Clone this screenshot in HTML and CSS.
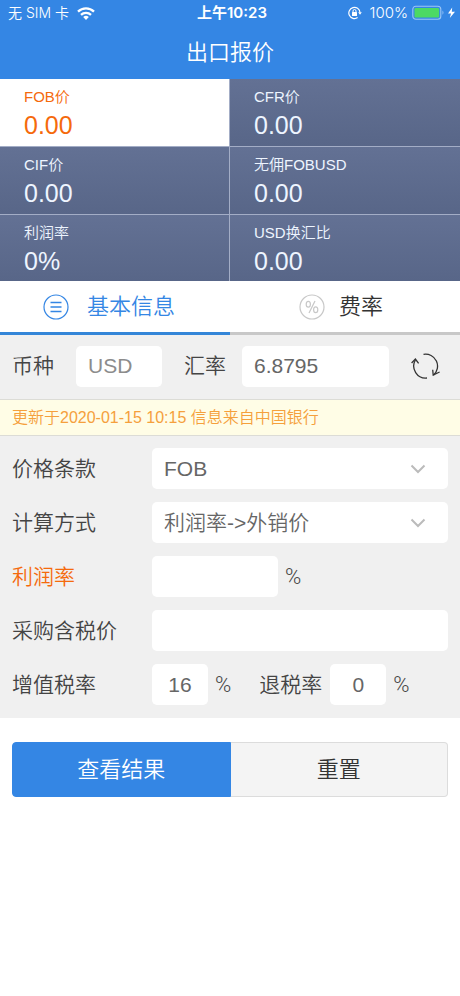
FILE: index.html
```
<!DOCTYPE html>
<html lang="zh-CN">
<head>
    <meta charset="UTF-8">
    <meta name="viewport" content="width=device-width, initial-scale=1.0">
    <title>出口报价</title>
    <link rel="stylesheet" href="styles.css">
</head>
<body>

    <!-- 顶部 -->
    <header class="header">
        <div class="status">
            <div class="status-left">
                <span>无 SIM 卡</span>
                <svg width="18" height="13" viewBox="0 0 18 13">
                    <g fill="none" stroke="#fff" stroke-width="2.3">
                        <path d="M1 4.6 A11.5 11.5 0 0 1 17 4.6"/>
                        <path d="M4 7.8 A7.2 7.2 0 0 1 14 7.8"/>
                    </g>
                    <path d="M9 13 L6.2 10 A4 4 0 0 1 11.8 10 Z" fill="#fff"/>
                </svg>
            </div>
            <div class="status-time">上午10:23</div>
            <div class="status-right">
                <svg width="14" height="14" viewBox="0 0 14 14">
                    <path d="M9.6 11.6 A5.6 5.6 0 1 1 12 6.4" fill="none" stroke="#fff" stroke-width="1.2"/>
                    <path d="M10.2 6.2 H13.8 L12 8.8 Z" fill="#fff"/>
                    <rect x="4" y="6" width="5" height="4" rx="0.6" fill="#fff"/>
                    <path d="M5 6.5 V5 A1.5 1.5 0 0 1 8 5 V6.5" fill="none" stroke="#fff" stroke-width="1"/>
                </svg>
                <span class="percent">100%</span>
                <svg width="44" height="16" viewBox="0 0 44 16">
                    <rect x="0.8" y="1.2" width="28" height="13" rx="3" fill="none" stroke="#9cc6f5" stroke-width="1.1"/>
                    <rect x="2.5" y="3" width="24.6" height="9.6" rx="1.2" fill="#4cd964"/>
                    <path d="M30.5 5.6 Q32.4 7.7 30.5 9.8 Z" fill="#9cc6f5"/>
                    <path d="M40.2 2.5 L36 8.6 H39 L37.8 13 L43 6.8 H39.8 Z" fill="#fff"/>
                </svg>
            </div>
        </div>
        <h1 class="title">出口报价</h1>
    </header>

    <main>
        <!-- 结果 -->
        <section class="results">
            <div class="cell active"><span class="name">FOB价</span><span class="value">0.00</span></div>
            <div class="cell"><span class="name">CFR价</span><span class="value">0.00</span></div>
            <div class="cell"><span class="name">CIF价</span><span class="value">0.00</span></div>
            <div class="cell"><span class="name">无佣FOBUSD</span><span class="value">0.00</span></div>
            <div class="cell"><span class="name">利润率</span><span class="value">0%</span></div>
            <div class="cell"><span class="name">USD换汇比</span><span class="value">0.00</span></div>
        </section>

        <!-- 标签页 -->
        <nav class="tabs">
            <a href="#basic" class="tab active">
                <svg width="26" height="26" viewBox="0 0 26 26" fill="none" stroke="#3486e4">
                    <circle cx="13" cy="13" r="12" stroke-width="1.2"/>
                    <path d="M7.5 8.5 H18.5 M7.5 13 H18.5 M7.5 17.5 H18.5" stroke-width="1.4"/>
                </svg>
                <span>基本信息</span>
            </a>
            <a href="#rates" class="tab">
                <svg width="26" height="26" viewBox="0 0 26 26" fill="none" stroke="#c8c8c8">
                    <circle cx="13" cy="13" r="12" stroke-width="1.2"/>
                    <ellipse cx="9.3" cy="10.2" rx="2.1" ry="2.9" stroke-width="1.2"/>
                    <ellipse cx="16.7" cy="15.8" rx="2.1" ry="2.9" stroke-width="1.2"/>
                    <path d="M16 7 L10 19" stroke-width="1.2"/>
                </svg>
                <span>费率</span>
            </a>
        </nav>

        <form id="basic">
            <div class="rate">
                <label for="currency">币种</label>
                <input type="text" id="currency" class="field currency" value="USD" readonly>
                <label for="exchange">汇率</label>
                <input type="text" id="exchange" class="field exchange" value="6.8795">
                <button type="button" class="refresh" aria-label="刷新汇率">
                    <svg width="30" height="26" viewBox="0 0 30 26" fill="none" stroke="#333" stroke-width="1.3">
                        <path d="M12.5 1.3 A12 12 0 0 1 22.4 22.2"/>
                        <path d="M21.7 16.8 L22.2 22 L28.6 19"/>
                        <path d="M16 25 A12 12 0 0 1 4.4 7"/>
                        <path d="M0.6 10 L4.4 6 L7.6 10.4"/>
                    </svg>
                </button>
            </div>

            <p class="notice">更新于2020-01-15 10:15 信息来自中国银行</p>

            <div class="fields">
                <div class="row">
                    <label class="label" for="terms">价格条款</label>
                    <div class="select">
                        <select id="terms" class="field"><option>FOB</option><option>CFR</option><option>CIF</option></select>
                        <svg width="16" height="10" viewBox="0 0 16 10"><path d="M1.5 1.5 L8 8 L14.5 1.5" fill="none" stroke="#bbb" stroke-width="2"/></svg>
                    </div>
                </div>
                <div class="row">
                    <label class="label" for="method">计算方式</label>
                    <div class="select">
                        <select id="method" class="field"><option>利润率-&gt;外销价</option><option>外销价-&gt;利润率</option></select>
                        <svg width="16" height="10" viewBox="0 0 16 10"><path d="M1.5 1.5 L8 8 L14.5 1.5" fill="none" stroke="#bbb" stroke-width="2"/></svg>
                    </div>
                </div>
                <div class="row">
                    <label class="label highlight" for="profit">利润率</label>
                    <input type="text" id="profit" class="field profit">
                    <span class="unit">%</span>
                </div>
                <div class="row">
                    <label class="label" for="cost">采购含税价</label>
                    <input type="text" id="cost" class="field wide">
                </div>
                <div class="row">
                    <label class="label" for="vat">增值税率</label>
                    <input type="text" id="vat" class="field small" value="16">
                    <span class="unit">%</span>
                    <label class="rebate" for="rebate">退税率</label>
                    <input type="text" id="rebate" class="field small" value="0">
                    <span class="unit">%</span>
                </div>
            </div>

            <div class="buttons">
                <button type="button" class="submit">查看结果</button>
                <button type="reset" class="reset">重置</button>
            </div>
        </form>
    </main>

</body>
</html>
```
FILE: styles.css
```
* {
    box-sizing: border-box;
}

body {
    margin: 0;
    background-color: #fff;
    color: #444;
    font-family: "Liberation Sans", "Noto Sans CJK SC", sans-serif;
    font-size: 21px;
    font-weight: 350;
    line-height: 24px;
}

/* 顶部 */
.header {
    background-color: #3486e4;
    color: #fff;
}

.status {
    display: grid;
    grid-template-columns: 1fr auto 1fr;
    align-items: center;
    height: 26px;
    padding: 0 4px 0 8px;
    font-family: Inter, "Noto Sans CJK SC", sans-serif;
    font-size: 14px;
    line-height: 26px;
}

.status-left,
.status-right {
    display: flex;
    align-items: center;
    gap: 8px;
}

.status-right {
    justify-content: flex-end;
    gap: 4px;
}

.percent {
    padding-left: 4px;
    font-size: 15px;
}

.status-time {
    font-size: 15px;
    font-weight: 600;
}

.title {
    margin: 0;
    height: 53px;
    font-size: 22px;
    font-weight: 350;
    line-height: 53px;
    text-align: center;
}

/* 结果 */
.results {
    display: grid;
    grid-template-columns: 1fr 1fr;
}

.cell {
    display: flex;
    flex-direction: column;
    height: 68px;
    padding: 7px 24px 0;
    border-right: 1px solid #a3adc6;
    border-bottom: 1px solid #a3adc6;
    background: linear-gradient(#637194, #586688);
    color: #eef5ff;
}

.cell:nth-child(even) {
    border-right: none;
}

.cell:nth-child(n+5) {
    height: 66px;
    border-bottom: none;
}

.cell.active {
    background: #fff;
    color: #f56a0c;
}

.name {
    font-size: 15px;
    line-height: 22px;
}

.value {
    font-size: 25px;
    line-height: 34px;
}

/* 标签页 */
.tabs {
    display: grid;
    grid-template-columns: 1fr 1fr;
}

.tab {
    display: flex;
    align-items: center;
    gap: 18px;
    height: 54px;
    padding-left: 43px;
    border-bottom: 3px solid #c8c8c8;
    color: #333;
    font-size: 22px;
    text-decoration: none;
}

.tab:last-child {
    gap: 14px;
    padding-left: 69px;
}

.tab.active {
    border-bottom-color: #3486d8;
    color: #3486e4;
}

/* 表单 */
.field {
    width: 100%;
    height: 41px;
    margin: 0;
    padding: 0 12px;
    border: none;
    border-radius: 5px;
    outline: none;
    background-color: #fff;
    color: #666;
    font-family: inherit;
    font-size: 21px;
    font-weight: inherit;
}

.rate {
    display: flex;
    align-items: center;
    height: 64px;
    padding: 0 19px 2px 12px;
    background-color: #f0f0f0;
}

.rate label {
    flex: none;
}

.currency {
    flex: none;
    width: 86px;
    margin: 0 22px;
    color: #8c8c8c;
}

.exchange {
    flex: 1;
    min-width: 0;
    margin: 0 22px 0 16px;
}

.refresh {
    display: flex;
    flex: none;
    padding: 0;
    border: none;
    background: none;
    cursor: pointer;
}

.notice {
    margin: 0;
    height: 37px;
    padding: 0 12px;
    border-top: 1px solid #dcdcd6;
    border-bottom: 1px solid #dcdcd6;
    background-color: #fffde6;
    color: #f5a03c;
    font-size: 16px;
    line-height: 35px;
}

.fields {
    display: flex;
    flex-direction: column;
    gap: 13px;
    padding: 12px 12px 13px;
    background-color: #f0f0f0;
}

.row {
    display: flex;
    align-items: center;
    height: 41px;
}

.label {
    flex: none;
    width: 140px;
}

.highlight {
    color: #f56a0c;
}

.select {
    position: relative;
    flex: 1;
}

.select select {
    display: block;
    appearance: none;
}

.select svg {
    position: absolute;
    top: 16px;
    right: 22px;
    pointer-events: none;
}

.profit {
    width: 126px;
}

.wide {
    flex: 1;
}

.small {
    width: 56px;
    text-align: center;
}

.unit {
    padding-left: 7px;
    font-family: Roboto, sans-serif;
    font-size: 22px;
}

.rebate {
    padding: 0 8px 0 28px;
}

/* 按钮 */
.buttons {
    display: flex;
    padding: 24px 12px;
}

.buttons button {
    flex: 1;
    height: 55px;
    padding: 0;
    font-family: inherit;
    font-size: 22px;
    font-weight: inherit;
    line-height: 24px;
    cursor: pointer;
}

.submit {
    border: 1px solid #3486e4;
    border-radius: 4px 0 0 4px;
    background-color: #3486e4;
    color: #fff;
}

.reset {
    border: 1px solid #dcdcdc;
    border-left: none;
    border-radius: 0 4px 4px 0;
    background-color: #f4f4f4;
    color: #333;
}
```
